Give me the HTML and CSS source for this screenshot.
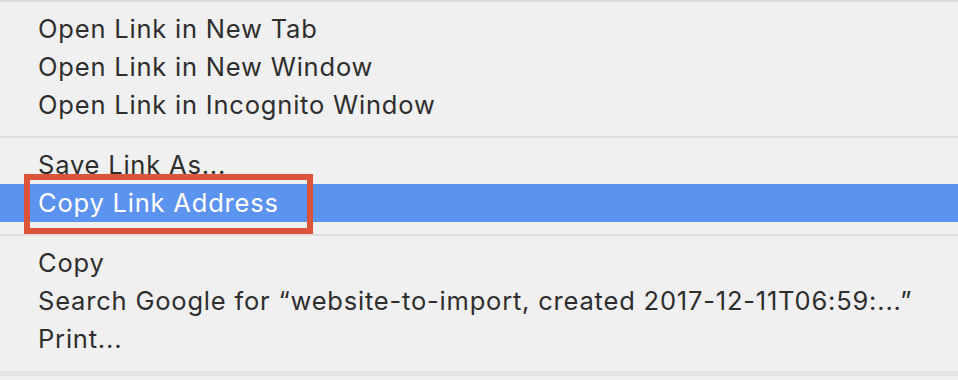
FILE: index.html
```html
<!DOCTYPE html>
<html lang="en">
<head>
    <meta charset="UTF-8">
    <meta name="viewport" content="width=device-width, initial-scale=1.0">
    <title>Context menu</title>
    <link rel="stylesheet" href="styles.css">
</head>
<body>
    <div class="menu">
        <div class="menu-group">
            <div class="menu-item">Open Link in New Tab</div>
            <div class="menu-item">Open Link in New Window</div>
            <div class="menu-item">Open Link in Incognito Window</div>
        </div>
        <div class="separator"></div>
        <div class="menu-group">
            <div class="menu-item">Save Link As...</div>
            <div class="menu-item selected">
                Copy Link Address
                <span class="callout"></span>
            </div>
        </div>
        <div class="separator"></div>
        <div class="menu-group last">
            <div class="menu-item">Copy</div>
            <div class="menu-item">Search Google for “website-to-import, created 2017-12-11T06:59:...”</div>
            <div class="menu-item">Print...</div>
        </div>
        <div class="separator bottom"></div>
    </div>
</body>
</html>
```

FILE: styles.css
```css
body {
    margin: 0;
    background-color: #f0f0f0;
    font-family: Inter, "Liberation Sans", sans-serif;
    color: #2e2e2e;
    overflow: hidden;
}
.menu {
    width: 958px;
    height: 380px;
    border-top: 2px solid #dcdcdc;
    box-sizing: border-box;
    background-color: #f0f0f0;
}
.menu-group {
    padding: 8px 0 12px 0;
}
.menu-group.last {
    padding-bottom: 13px;
}
.menu-item {
    position: relative;
    height: 38px;
    line-height: 38px;
    padding-left: 38px;
    font-size: 25.5px;
    letter-spacing: 0.8px;
    white-space: nowrap;
}
.menu-item.selected {
    background-color: #5c93ef;
    color: #fff;
}
.separator {
    height: 2px;
    background-color: #dedede;
}
.separator.bottom {
    height: 5px;
    background-color: #e2e2e2;
}
.callout {
    position: absolute;
    left: 24px;
    top: -10px;
    width: 289px;
    height: 60px;
    border: 6px solid #dc5439;
    box-sizing: border-box;
}
```
